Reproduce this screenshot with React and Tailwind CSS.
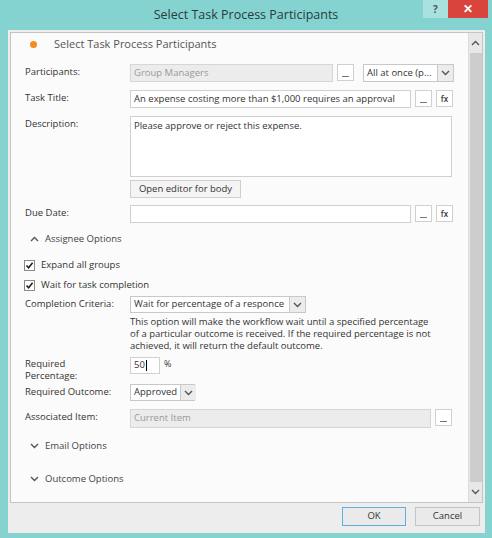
import React from 'react';

const font = { fontFamily: '"Open Sans", "Noto Sans", sans-serif' };

function Chevron({ up = false, className = '' }) {
  return (
    <svg width="9" height="6" viewBox="0 0 9 6" className={className}>
      <path d={up ? 'M1 5 L4.5 1.5 L8 5' : 'M1 1 L4.5 4.5 L8 1'} fill="none" stroke="#555" strokeWidth="1.4" />
    </svg>
  );
}

function DotsBtn() {
  return (
    <div className="w-[17px] h-[17px] border border-[#d0d0d0] bg-white flex items-end justify-center pb-[3px] shrink-0">
      <span className="block w-[7px] h-[1px] bg-[#777]" />
    </div>
  );
}

function FxBtn() {
  return (
    <div className="w-[17px] h-[17px] border border-[#d0d0d0] bg-white flex items-center justify-center text-[8px] font-semibold text-[#333] shrink-0">fx</div>
  );
}

function ArrowBox() {
  return (
    <div className="w-[16px] h-full border-l border-[#c8c8c8] bg-[#ececec] flex items-center justify-center shrink-0">
      <Chevron />
    </div>
  );
}

function Check({ label }) {
  return (
    <div className="flex items-center gap-[6px] h-[16px]">
      <div className="w-[11px] h-[11px] border border-[#8a8a8a] bg-white flex items-center justify-center">
        <svg width="9" height="9" viewBox="0 0 9 9">
          <path d="M1.5 4.5 L3.6 6.8 L7.6 1.8" fill="none" stroke="#222" strokeWidth="1.6" />
        </svg>
      </div>
      <span>{label}</span>
    </div>
  );
}

function Section({ label, up = false, className = '' }) {
  return (
    <div className={`flex items-center h-[20px] pl-[19px] gap-[6px] text-[#444] ${className}`}>
      <Chevron up={up} />
      <span>{label}</span>
    </div>
  );
}

function Row({ label, className = '', labelClass = 'leading-[13px]', children }) {
  return (
    <div className={`flex ${className}`}>
      <div className={`w-[105px] shrink-0 pt-[1px] ${labelClass}`}>{label}</div>
      <div className="flex-1 min-w-0">{children}</div>
    </div>
  );
}

export default function App() {
  return (
    <div className="w-[492px] h-[538px] bg-[#84d3d1] flex flex-col text-[9.5px] text-[#333]" style={font}>
      {/* title bar */}
      <div className="h-[30px] flex shrink-0 relative">
        <div className="flex-1 flex items-center justify-center pt-[1px] text-[12.5px] text-[#2b3a3a]">
          Select Task Process Participants
        </div>
        <div className="absolute top-0 right-[4px] flex">
          <div className="w-[25px] h-[18px] bg-[#a9e1df] flex items-center justify-center text-[10px] font-bold text-[#555]">?</div>
          <div className="w-[40px] h-[18px] bg-[#d9443c] flex items-center justify-center text-[12px] font-bold text-white">✕</div>
        </div>
      </div>

      {/* client area */}
      <div className="flex-1 ml-[8px] mr-[7px] mb-[5px] bg-[#ededed] flex flex-col p-[2px]">
        <div className="h-[471px] border border-[#c4c4c4] bg-[#fbfbfb] flex">
          <div className="flex-1 pl-[14px] pr-[14px]">
            {/* header */}
            <div className="h-[22px] flex items-center gap-[17px] pl-[5px] text-[11px] text-[#555]">
              <span className="w-[7px] h-[7px] rounded-full bg-[#f68b1f]" />
              <span>Select Task Process Participants</span>
            </div>

            <Row label="Participants:" className="mt-[9px]">
              <div className="flex gap-[4px] h-[18px]">
                <div className="w-[203px] h-full border border-[#d6d6d6] bg-[#ececec] px-[3px] flex items-center text-[#999]">Group Managers</div>
                <DotsBtn />
                <div className="ml-[5px] w-[91px] h-full border border-[#c8c8c8] bg-white flex items-center">
                  <span className="flex-1 px-[3px] whitespace-nowrap overflow-hidden text-[#333]">All at once (p...</span>
                  <ArrowBox />
                </div>
              </div>
            </Row>

            <Row label="Task Title:" className="mt-[8px]">
              <div className="flex gap-[4px] h-[18px]">
                <div className="w-[281px] h-full border border-[#d0d0d0] bg-white px-[3px] flex items-center whitespace-nowrap overflow-hidden">An expense costing more than $1,000 requires an approval</div>
                <DotsBtn />
                <FxBtn />
              </div>
            </Row>

            <Row label="Description:" className="mt-[8px]">
              <div className="w-[322px] h-[61px] border border-[#d0d0d0] bg-white px-[3px] pt-[2px]">Please approve or reject this expense.</div>
              <div className="mt-[3px] w-[111px] h-[18px] border border-[#cfcfcf] bg-[#f4f4f4] flex items-center justify-center">Open editor for body</div>
            </Row>

            <Row label="Due Date:" className="mt-[7px]">
              <div className="flex gap-[4px] h-[18px]">
                <div className="w-[281px] h-full border border-[#d0d0d0] bg-white" />
                <DotsBtn />
                <FxBtn />
              </div>
            </Row>

            <Section label="Assignee Options" up className="mt-[6px] -ml-[14px]" />

            <div className="mt-[8px] flex flex-col gap-[4px] -ml-[1px]">
              <Check label="Expand all groups" />
              <Check label="Wait for task completion" />
            </div>

            <Row label="Completion Criteria:" className="mt-[3px]">
              <div className="w-[176px] h-[17px] border border-[#c8c8c8] bg-white flex items-center">
                <span className="flex-1 pl-[3px] whitespace-nowrap overflow-hidden">Wait for percentage of a responce</span>
                <ArrowBox />
              </div>
              <p className="mt-[3px] text-[9.5px] leading-[12px] w-[306px]">
                This option will make the workflow wait until a specified percentage of a particular outcome is received. If the required percentage is not achieved, it will return the default outcome.
              </p>
            </Row>

            <Row label={<>Required<br />Percentage:</>} labelClass="leading-[12px]" className="mt-[5px]">
              <div className="flex items-start gap-[4px]">
                <div className="w-[30px] h-[17px] border border-[#d0d0d0] bg-white px-[3px] flex items-center">50<span className="w-[1px] h-[11px] bg-black ml-[1px]" /></div>
                <span className="text-[9px]">%</span>
              </div>
            </Row>

            <Row label="Required Outcome:" className="mt-[2px]">
              <div className="w-[65px] h-[17px] border border-[#c8c8c8] bg-white flex items-center">
                <span className="flex-1 px-[3px]">Approved</span>
                <ArrowBox />
              </div>
            </Row>

            <Row label="Associated Item:" className="mt-[8px]">
              <div className="flex gap-[4px] h-[19px]">
                <div className="w-[301px] h-full border border-[#d6d6d6] bg-[#ececec] px-[3px] flex items-center text-[#999]">Current Item</div>
                <DotsBtn />
              </div>
            </Row>

            <Section label="Email Options" className="mt-[8px] -ml-[14px]" />
            <Section label="Outcome Options" className="mt-[13px] -ml-[14px]" />
          </div>

          {/* scrollbar */}
          <div className="w-[16px] bg-[#e8e8e8] flex flex-col items-center border-l border-[#dcdcdc]">
            <div className="h-[16px] flex items-center justify-center mt-[2px]"><Chevron up /></div>
            <div className="flex-1 w-[12px] bg-[#cdcdcd] my-[2px]" />
            <div className="h-[16px] flex items-center justify-center mb-[2px]"><Chevron /></div>
          </div>
        </div>

        {/* buttons */}
        <div className="flex justify-end gap-[9px] mt-[4px] pr-[3px]">
          <div className="w-[64px] h-[19px] border border-[#5fb0e0] bg-[#eaeaea] flex items-center justify-center">OK</div>
          <div className="w-[65px] h-[19px] border border-[#c4c4c4] bg-[#eaeaea] flex items-center justify-center">Cancel</div>
        </div>
      </div>
    </div>
  );
}
